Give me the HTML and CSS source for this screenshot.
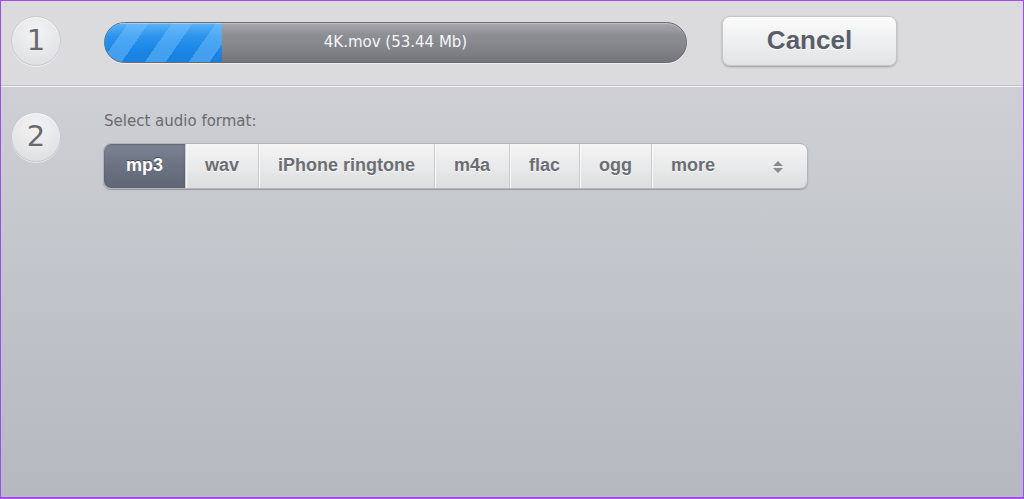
FILE: index.html
```html
<!DOCTYPE html>
<html lang="en">
<head>
<meta charset="utf-8">
<title>Audio converter</title>
<link rel="stylesheet" href="styles.css">
</head>
<body>
<div class="app">
  <section class="step step-upload">
    <div class="num">1</div>
    <div class="progress">
      <div class="progress-fill" style="width:117px"></div>
      <span class="progress-label">4K.mov (53.44 Mb)</span>
    </div>
    <button class="cancel">Cancel</button>
  </section>
  <section class="step step-format">
    <div class="num">2</div>
    <div class="format">
      <div class="format-label">Select audio format:</div>
      <div class="segments">
        <span class="seg seg-first active">mp3</span>
        <span class="seg">wav</span>
        <span class="seg">iPhone ringtone</span>
        <span class="seg">m4a</span>
        <span class="seg">flac</span>
        <span class="seg">ogg</span>
        <span class="seg seg-more">more
          <svg class="updown" width="12" height="14" viewBox="0 0 12 14"><path d="M6 1 L11 6 L1 6 Z" fill="#8a8c90"/><path d="M1 8 L11 8 L6 13 Z" fill="#8a8c90"/></svg>
        </span>
      </div>
    </div>
  </section>
</div>
</body>
</html>
```
FILE: styles.css
```css
* { box-sizing: border-box; }
html, body { margin: 0; padding: 0; }
body { width: 1024px; height: 499px; overflow: hidden; font-family: "DejaVu Sans", Verdana, sans-serif; }

.app {
  width: 1024px;
  height: 499px;
  border: 1px solid #a24cf0;
  border-bottom-width: 2px;
  display: flex;
  flex-direction: column;
  background: linear-gradient(to bottom, #d4d5d9 0, #c6c9ce 200px, #b4b9c0 100%);
}

.step { display: flex; align-items: flex-start; padding-left: 10px; }

.step-upload {
  height: 85px;
  padding-top: 15px;
  background: #dbdbde;
  border-bottom: 1px solid #c2c3c7;
}

.step-format {
  flex: 1;
  padding-top: 25px;
  border-top: 1px solid #f3f3f5;
}

.num {
  width: 50px;
  height: 50px;
  border-radius: 50%;
  flex: none;
  display: flex;
  align-items: center;
  justify-content: center;
  font-size: 29px;
  color: #6a6a6c;
  background: radial-gradient(circle at 50% 30%, #f3f3f5 0, #e6e7e9 55%, #d9dadd 100%);
  border: 1px solid #c9cacd;
  box-shadow: inset 0 1px 0 #fbfbfc, 0 1px 0 rgba(255,255,255,.6);
  padding-bottom: 2px;
}

.progress {
  position: relative;
  margin-left: 43px;
  margin-top: 6px;
  width: 583px;
  height: 41px;
  border-radius: 21px;
  border: 1px solid #6a6c72;
  overflow: hidden;
  display: flex;
  align-items: center;
  justify-content: center;
  background: linear-gradient(to bottom, #a7a9ae 0, #8d8f95 30%, #84868c 60%, #73757b 100%);
  box-shadow: inset 0 1px 0 rgba(255,255,255,.25), 0 1px 0 rgba(255,255,255,.5);
}

.progress-fill {
  position: absolute;
  left: 0; top: 0; bottom: 0;
  background:
    repeating-linear-gradient(125deg, rgba(255,255,255,0) 0, rgba(255,255,255,0) 19px, rgba(120,195,255,.45) 19px, rgba(120,195,255,.45) 36px),
    linear-gradient(to bottom, #5cb2f6 0, #2b93ec 35%, #1a86e6 70%, #1a80dc 100%);
  box-shadow: inset 0 1px 0 rgba(255,255,255,.35);
}

.progress-label {
  position: relative;
  font-size: 15px;
  color: #f4f5f7;
  margin-top: -1px;
}

.cancel {
  margin-left: 35px;
  width: 175px;
  height: 50px;
  border-radius: 8px;
  border: 1px solid #c4c5c8;
  background: linear-gradient(to bottom, #fbfbfb 0, #eeeff0 50%, #e2e3e5 100%);
  box-shadow: 0 1px 2px rgba(0,0,0,.3), inset 0 1px 0 #fff;
  font-family: "Liberation Sans", Arial, sans-serif;
  font-weight: bold;
  font-size: 26px;
  color: #5a5e69;
  text-shadow: 0 1px 0 #fff;
  padding: 0 0 2px 0;
  cursor: pointer;
}

.format { margin-left: 42px; padding-top: 1px; }

.format-label {
  font-size: 15px;
  line-height: 16px;
  color: #6a6b6e;
  padding-left: 1px;
  margin-top: 0;
}

.segments {
  margin-top: 14px;
  display: flex;
  height: 46px;
  border-radius: 8px;
  border: 1px solid #b3b5b9;
  box-shadow: 0 1px 1px rgba(0,0,0,.25);
  overflow: hidden;
  font-family: "Liberation Sans", Arial, sans-serif;
  font-weight: bold;
  font-size: 18px;
  background: linear-gradient(to bottom, #f5f5f6 0, #e9eaeb 50%, #dcdde0 100%);
}

.seg {
  display: flex;
  align-items: center;
  padding: 0 19px 2px 19px;
  color: #6b6e73;
  text-shadow: 0 1px 0 #fff;
  border-left: 1px solid #cbcccf;
  box-shadow: inset 1px 0 0 #f8f8f9;
}

.seg-first { border-left: 0; box-shadow: none; }

.seg.active {
  padding: 0 22px 2px 22px;
  color: #fff;
  text-shadow: 0 -1px 0 #40454f;
  background: linear-gradient(to bottom, #7c8392 0, #6b7282 50%, #5f6676 100%);
  box-shadow: inset 0 1px 2px rgba(0,0,0,.25);
}

.seg-more {
  width: 156px;
  justify-content: space-between;
  padding-right: 23px;
}

.updown { display: block; margin-top: 3px; }
```
